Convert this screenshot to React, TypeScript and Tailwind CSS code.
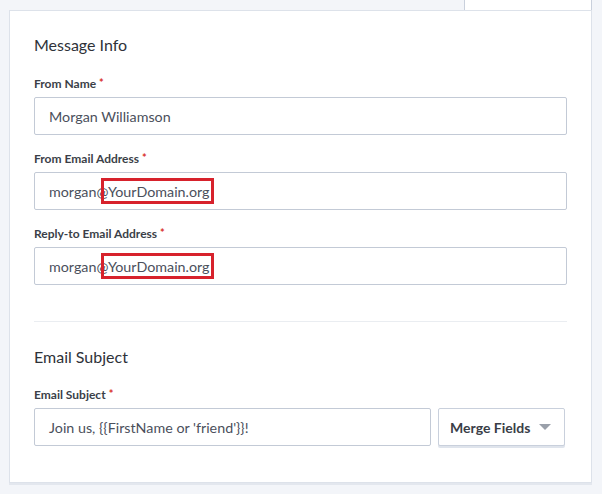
import { ReactNode } from "react";

const Label = ({ children }: { children: ReactNode }) => (
  <div className="h-[18px] mb-[4px] text-[12px] leading-[18px] font-bold text-[#3b3f48]">
    {children}
    <span className="text-[#d9312b] ml-[3px] relative -top-[1px] text-[11px]">*</span>
  </div>
);

const Highlight = ({ children }: { children: ReactNode }) => (
  <span className="relative">
    {children}
    <span className="absolute -left-[7px] -right-[4px] -top-[5px] -bottom-[4px] border-[3px] border-[#d7222c]" />
  </span>
);

const Input = ({ children, className = "" }: { children: ReactNode; className?: string }) => (
  <div
    className={`h-[38px] border border-[#c3cad6] rounded-[2px] bg-white pl-[14px] pt-[1px] flex items-center text-[14.3px] text-[#4b505c] ${className}`}
  >
    <span>{children}</span>
  </div>
);

const Field = ({ label, children }: { label: string; children: ReactNode }) => (
  <div className="mb-[15px]">
    <Label>{label}</Label>
    {children}
  </div>
);

const App = () => {
  return (
    <div
      className="w-[602px] h-[494px] bg-[#f3f5f9] overflow-hidden"
      style={{ fontFamily: "Lato, 'Liberation Sans', sans-serif" }}
    >
      <div className="h-[10px] flex">
        <div className="ml-[464px] w-[128px] h-[10px] bg-white border-l border-r border-[#c9d0dc]" />
      </div>
      <div className="ml-[9px] w-[583px] h-[473px] bg-white border border-[#dde2ea] shadow-[0_2px_0_#e3e7ee] pt-[22px] px-[24px]">
        <h2 className="text-[16px] leading-[24px] text-[#2e3239] mb-[18px]">Message Info</h2>
        <Field label="From Name">
          <Input>Morgan Williamson</Input>
        </Field>
        <Field label="From Email Address">
          <Input>
            morgan@<Highlight>YourDomain.org</Highlight>
          </Input>
        </Field>
        <div>
          <Label>Reply-to Email Address</Label>
          <Input>
            morgan@<Highlight>YourDomain.org</Highlight>
          </Input>
        </div>
        <div className="mt-[36px] border-t border-[#eaedf1]" />
        <h2 className="mt-[23px] text-[16px] leading-[24px] text-[#2e3239] mb-[17px]">Email Subject</h2>
        <Label>Email Subject</Label>
        <div className="flex gap-[7px]">
          <Input className="flex-1">Join us, {"{{FirstName or 'friend'}}"}!</Input>
          <button className="w-[127px] h-[38px] mr-[2px] bg-white border border-[#c9d0dc] rounded-[2px] shadow-[0_2px_0_#dfe4ec] flex items-center pl-[11px] text-[14px] font-bold text-[#3a3e47]">
            Merge Fields
            <svg width="12" height="6" viewBox="0 0 12 6" className="ml-[9px]">
              <path d="M0 0h12L6 6z" fill="#9aa0aa" />
            </svg>
          </button>
        </div>
      </div>
    </div>
  );
};

export default App;
